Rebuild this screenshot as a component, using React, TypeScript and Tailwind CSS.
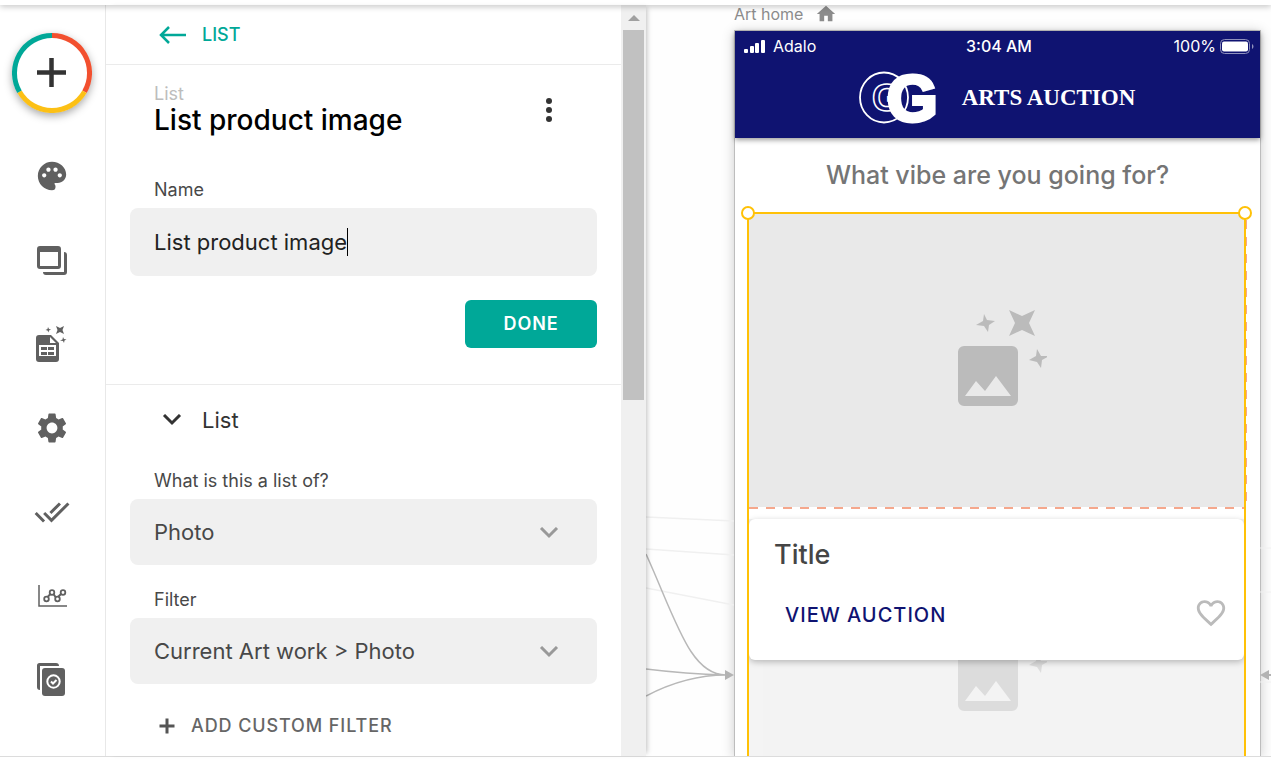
import { useState } from "react";
import type { ReactNode } from "react";
import {
  MdDoneAll,
  MdFavoriteBorder,
  MdHome,
  MdPalette,
  MdSettings,
} from "react-icons/md";

function ScreensIcon() {
  return (
    <svg width="36" height="36" viewBox="0 0 36 36" fill="#606060">
      <path
        fillRule="evenodd"
        d="M6 4h18a3 3 0 0 1 3 3v17a3 3 0 0 1-3 3H6a3 3 0 0 1-3-3V7a3 3 0 0 1 3-3Zm0 6v14h18V10Z"
      />
      <path d="M30 10a3 3 0 0 1 3 3v17a3 3 0 0 1-3 3H12a3 3 0 0 1-3-3h21Z" />
    </svg>
  );
}

function DatabaseIcon() {
  return (
    <svg width="36" height="40" viewBox="0 0 36 40" fill="#606060">
      <path
        fillRule="evenodd"
        d="M5 11h12l8 8v16a3 3 0 0 1-3 3H5a3 3 0 0 1-3-3V14a3 3 0 0 1 3-3Zm11 2v6h6ZM5 21v11h17V21Z"
      />
      <path d="M7 23h6v3H7zm7 0h6v3h-6zm-7 5h6v3H7zm7 0h6v3h-6z" />
      <path d="m22 2 4 2 4-2-1.500 4L30 10l-4-2-4 2 1.500-4Z" />
      <path d="m14 3 1 2 2 .5-2 1-.5 2-1-2-2-.5 2-1ZM29 13l1 2 2.500.5-2 1-.5 2.500-1-2-3-.5 2.500-1Z" />
    </svg>
  );
}

function AnalyticsIcon() {
  return (
    <svg
      width="36"
      height="36"
      viewBox="0 0 36 36"
      fill="none"
      stroke="#606060"
      strokeWidth="1.500"
    >
      <path d="M5 7v21h28" />
      <path d="m13.500 19 3-3m3 0 2 3m2.500 0 3-3" strokeWidth="2" />
      <g strokeWidth="1.800">
        <circle cx="12.500" cy="21" r="2.300" />
        <circle cx="18" cy="14.500" r="2.300" />
        <circle cx="23.500" cy="21" r="2.300" />
        <circle cx="29" cy="14.500" r="2.300" />
      </g>
    </svg>
  );
}

function PublishIcon() {
  return (
    <svg width="36" height="36" viewBox="0 0 36 36" fill="#606060">
      <path d="M5.500 1H22a3 3 0 0 1 3 3H6v24a3 3 0 0 1-3-3V3.500A2.500 2.500 0 0 1 5.500 1Z" />
      <rect x="8" y="6" width="23" height="28" rx="3" />
      <circle cx="19.500" cy="19.500" r="6.200" fill="none" stroke="#fff" strokeWidth="2" />
      <path d="m17 19.500 2 2 3.500-3.500" fill="none" stroke="#fff" strokeWidth="2" />
    </svg>
  );
}

const NAV_ITEMS = [
  { label: "Branding", icon: <MdPalette size={34} /> },
  { label: "Screens", icon: <ScreensIcon /> },
  { label: "Database", icon: <DatabaseIcon /> },
  { label: "Settings", icon: <MdSettings size={36} /> },
  { label: "Checks", icon: <MdDoneAll size={36} /> },
  { label: "Analytics", icon: <AnalyticsIcon /> },
  { label: "Publish", icon: <PublishIcon /> },
];

function Sidebar() {
  return (
    <nav className="flex w-[106px] shrink-0 flex-col items-center overflow-hidden border-r border-[#e8e8e8] pt-7 pr-[2px] text-[#606060]">
      <button
        aria-label="Add component"
        className="mb-[21px] size-20 shrink-0 rounded-full bg-white shadow-[0_3px_8px_rgba(0,0,0,0.35)]"
      >
        <svg width="80" height="80" viewBox="0 0 80 80" fill="none" strokeWidth="5">
          <path d="M40 2.500A37.500 37.500 0 0 1 72.500 58.750" stroke="#f2502f" />
          <path d="M72.500 58.750A37.500 37.500 0 0 1 7.500 58.750" stroke="#fcc015" />
          <path d="M7.500 58.750A37.500 37.500 0 0 1 40 2.500" stroke="#00a898" />
          <path d="M39.500 25v29M25 39.500h29" stroke="#333" strokeWidth="4.500" />
        </svg>
      </button>
      {NAV_ITEMS.map((item) => (
        <button
          key={item.label}
          aria-label={item.label}
          className="flex h-[84px] w-full shrink-0 items-center justify-center"
        >
          {item.icon}
        </button>
      ))}
    </nav>
  );
}

function Chevron({ className }: { className?: string }) {
  return (
    <svg
      width="20"
      height="12"
      viewBox="0 0 20 12"
      fill="none"
      stroke="currentColor"
      strokeWidth="3"
      className={className}
    >
      <path d="m2 1 8 8 8-8" />
    </svg>
  );
}

interface SelectFieldProps {
  id: string;
  label: string;
  value: string;
}

function SelectField({ id, label, value }: SelectFieldProps) {
  return (
    <div>
      <label htmlFor={id} className="block pl-6 text-lg leading-5 text-[#484848]">
        {label}
      </label>
      <div className="relative mt-2">
        <select
          id={id}
          className="h-[66px] w-full appearance-none rounded-lg bg-[#f0f0f0] px-6 text-[22px] text-[#484848] outline-none"
        >
          <option>{value}</option>
        </select>
        <Chevron className="pointer-events-none absolute top-7 right-[38px] text-[#999]" />
      </div>
    </div>
  );
}

function Inspector() {
  const [name, setName] = useState("List product image");

  return (
    <aside className="flex w-[540px] shrink-0 shadow-[4px_0_5px_-3px_rgba(0,0,0,0.25)]">
      <div className="min-w-0 flex-1 overflow-hidden">
        <div className="flex h-[60px] items-center border-b border-[#ebebeb] pl-[53px]">
          <button className="flex items-center gap-4 text-lg font-medium text-[#00a898]">
            <svg
              width="27"
              height="18"
              viewBox="0 0 27 18"
              fill="none"
              stroke="currentColor"
              strokeWidth="2.500"
            >
              <path d="M10 1 2 9l8 8M2 9h25" />
            </svg>
            LIST
          </button>
        </div>

        <section className="border-b border-[#ebebeb] px-6 pt-[19px] pb-9">
          <div className="flex items-center justify-between pr-9 pl-6">
            <div>
              <p className="text-lg leading-5 text-[#bdbdbd]">List</p>
              <h1 className="text-[28px] leading-8 font-medium text-black">{name}</h1>
            </div>
            <button aria-label="More options" className="flex h-8 w-6 items-center justify-center">
              <svg width="6" height="24" viewBox="0 0 6 24" fill="#333">
                <circle cx="3" cy="3" r="3" />
                <circle cx="3" cy="12" r="3" />
                <circle cx="3" cy="21" r="3" />
              </svg>
            </button>
          </div>

          <label
            htmlFor="name"
            className="mt-11 block pl-6 text-lg leading-5 text-[#484848]"
          >
            Name
          </label>
          <div className="relative mt-2">
            <input
              id="name"
              type="text"
              value={name}
              onChange={(e) => setName(e.target.value)}
              className="h-[68px] w-full rounded-lg bg-[#f0f0f0] px-6 text-[22px] text-[#222] caret-transparent outline-none"
            />
            {/* text cursor */}
            <span className="absolute top-5 left-[217px] h-7 w-px bg-black" />
          </div>
          <div className="mt-6 flex justify-end">
            <button className="h-12 w-[132px] rounded-md bg-[#00a898] text-lg font-semibold tracking-wider text-white">
              DONE
            </button>
          </div>
        </section>

        <section className="px-6">
          <button className="flex h-[70px] w-full items-center gap-5 pl-8 text-[22px] text-[#333]">
            <Chevron />
            List
          </button>
          <div className="flex flex-col gap-[25px] pt-4">
            <SelectField id="list-source" label="What is this a list of?" value="Photo" />
            <SelectField id="list-filter" label="Filter" value="Current Art work > Photo" />
          </div>
          <button className="mt-[18px] flex h-12 items-center gap-4 pl-[29px] text-lg font-medium tracking-wider text-[#666]">
            <svg width="16" height="16" viewBox="0 0 16 16" stroke="#555" strokeWidth="3">
              <path d="M8 .5v15M.5 8h15" />
            </svg>
            ADD CUSTOM FILTER
          </button>
        </section>
      </div>

      <div className="flex w-[25px] shrink-0 flex-col items-center bg-[#f0f0f0]">
        <div className="flex h-[25px] items-center">
          <svg width="12" height="6" viewBox="0 0 12 6" fill="#a0a0a0">
            <path d="M6 0 12 6H0Z" />
          </svg>
        </div>
        <div className="w-[21px] flex-1">
          <div className="h-[51%] bg-[#c1c1c1]" />
        </div>
      </div>
    </aside>
  );
}

function ImagePlaceholder({ faded = false }: { faded?: boolean }) {
  return (
    <div
      className={
        faded
          ? "flex h-[293px] items-center justify-center bg-[#e9e9e9] pb-[6px] opacity-50"
          : "flex h-[293px] items-center justify-center bg-[#e9e9e9] pb-[6px]"
      }
    >
      <svg width="100" height="100" viewBox="0 0 100 100" fill="#bbb">
        <path
          fillRule="evenodd"
          d="M17 38h48a6 6 0 0 1 6 6v48a6 6 0 0 1-6 6H17a6 6 0 0 1-6-6V44a6 6 0 0 1 6-6Zm1 50h46L49 68 38 83l-9-10Z"
        />
        <path d="m62 2 13 6 13-6-6 13 6 13-13-6-13 6 6-13Z" />
        <path d="m37 6 3 6 8 1-6 4-1 7-4-6-8-1 7-4ZM90 41l4 7 8 0-7 4-1 8-4-6-8-2 7-4Z" />
      </svg>
    </div>
  );
}

function Logo() {
  return (
    <svg
      width="82"
      height="56"
      viewBox="0 0 82 56"
      className="overflow-visible font-['Liberation_Sans',sans-serif] font-bold"
      fill="#fff"
      stroke="#fff"
    >
      <ellipse cx="24" cy="27.500" rx="24" ry="25" fill="none" strokeWidth="1.800" />
      <text x="12" y="41" fill="#0f1371" strokeWidth="1.500" className="text-[38px]">
        G
      </text>
      <text x="27" y="51" strokeWidth="4" className="text-[65px]">
        G
      </text>
    </svg>
  );
}

function StatusBar() {
  return (
    <div className="grid h-[30px] grid-cols-3 items-center pr-[6px] pl-[9px] text-base">
      <div className="flex items-center gap-2">
        <svg width="21" height="13" viewBox="0 0 21 13" fill="#fff">
          <rect y="9" width="4" height="4" rx="1" />
          <rect x="6" y="6" width="4" height="7" rx="1" />
          <rect x="11" y="3" width="4" height="10" rx="1" />
          <rect x="17" width="4" height="13" rx="1" />
        </svg>
        Adalo
      </div>
      <div className="text-center font-medium">3:04 AM</div>
      <div className="flex items-center justify-end gap-1">
        100%
        <svg width="34" height="15" viewBox="0 0 34 15" fill="none">
          <rect x=".5" y=".5" width="29" height="14" rx="4" stroke="#8f91bd" />
          <rect x="2" y="2.500" width="26" height="10" rx="2" fill="#fff" />
          <path d="M32 5v5c2-1 2-4 0-5Z" fill="#8f91bd" />
        </svg>
      </div>
    </div>
  );
}

function Handle({ className }: { className: string }) {
  return (
    <span
      className={`absolute z-20 size-[14px] rounded-full border-2 border-[#ffc107] bg-white ${className}`}
    />
  );
}

function PhoneScreen() {
  return (
    <div className="flex min-h-0 flex-1 flex-col border border-b-0 border-[#bdbdbd] bg-white shadow-[0_2px_12px_rgba(0,0,0,0.2)]">
      <header className="relative h-[107px] shrink-0 bg-[#0f1371] text-white shadow-[0_2px_5px_rgba(0,0,0,0.4)]">
        <StatusBar />
        <div className="flex h-[74px] items-center justify-center gap-5">
          <Logo />
          <span className="font-['Liberation_Serif',serif] text-[23px] font-bold">
            ARTS AUCTION
          </span>
        </div>
      </header>
      <h2 className="flex h-[74px] shrink-0 items-center justify-center pt-[2px] text-[25px] font-medium text-[#757575]">
        What vibe are you going for?
      </h2>
      <div className="relative mr-[14px] ml-3 min-h-0 flex-1">
        <Handle className="-top-[6px] -left-[6px]" />
        <Handle className="-top-[6px] -right-[6px]" />
        <span className="absolute top-2 -right-px h-[289px] w-px bg-[repeating-linear-gradient(#f5a78c_0_9px,transparent_9px_17px)]" />
        <div className="h-full overflow-hidden border-2 border-b-0 border-[#ffc107]">
          <article className="relative z-10">
            <ImagePlaceholder />
            <div className="h-[2px] bg-[repeating-linear-gradient(90deg,#f5a78c_0_9px,transparent_9px_17px)]" />
            <div className="mt-[10px] flex h-[141px] flex-col justify-between rounded-md bg-white px-4 pt-4 pb-[30px] shadow-[0_2px_6px_rgba(0,0,0,0.25)]">
              <h3 className="pl-[9px] text-[27px] leading-10 font-medium text-[#454545]">Title</h3>
              <div className="flex items-center justify-between">
                <button className="pt-[3px] pl-5 text-xl font-medium tracking-wider text-[#0f1371]">
                  VIEW AUCTION
                </button>
                <button aria-label="Favorite" className="text-[#bbb]">
                  <MdFavoriteBorder size={34} />
                </button>
              </div>
            </div>
          </article>
          <div className="-mt-[141px]">
            <ImagePlaceholder faded />
          </div>
        </div>
      </div>
    </div>
  );
}

function CanvasArea({ children }: { children: ReactNode }) {
  return (
    <main className="relative -z-10 flex min-w-0 flex-1 flex-col overflow-hidden bg-[#fefefe] pr-[10px] pl-[88px]">
      {/* navigation links between screens */}
      <svg
        className="absolute top-[495px] left-0"
        width="88"
        height="220"
        viewBox="0 0 88 220"
        fill="none"
        stroke="#b8b8b8"
        strokeWidth="1.500"
      >
        <path d="M0 17 88 21M0 49 88 55M0 88 88 105" stroke="#f0f0f0" />
        <path d="M0 54C30 120 44 175 80 175M0 169Q40 174 80 175M0 196Q40 175 80 175" />
        <path d="m79 170 9 5-9 5Z" fill="#b3b3b3" stroke="none" />
      </svg>
      <svg
        className="absolute top-[495px] right-0"
        width="11"
        height="220"
        viewBox="0 0 11 220"
        fill="none"
      >
        <path d="M0 48h11M0 92h11M0 182h11" stroke="#f0f0f0" />
        <path d="M8 175h3" stroke="#b3b3b3" strokeWidth="2" />
        <path d="m9 170-9 5 9 5Z" fill="#b3b3b3" />
      </svg>
      <div className="flex h-[25px] shrink-0 items-start gap-3 text-base leading-[18px] text-[#8c8c8c]">
        Art home
        <MdHome size={22} className="-mt-[2px]" />
      </div>
      {children}
    </main>
  );
}

export default function App() {
  return (
    <div className="isolate flex h-screen flex-col bg-white pb-[5px] font-['Inter',sans-serif]">
      <div className="z-10 h-[5px] shrink-0 shadow-[0_1px_6px_rgba(0,0,0,0.3)]" />
      <div className="flex min-h-0 flex-1 border-b border-[#dcdcdc]">
        <Sidebar />
        <Inspector />
        <CanvasArea>
          <PhoneScreen />
        </CanvasArea>
      </div>
    </div>
  );
}
